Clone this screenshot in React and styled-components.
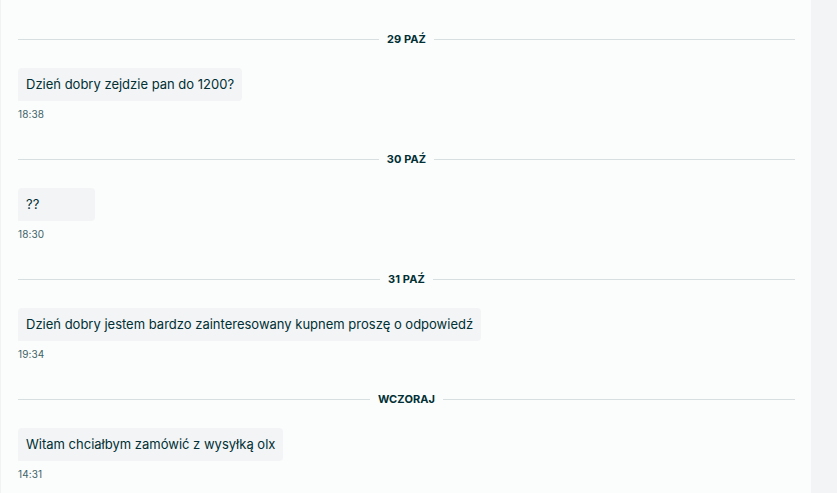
import React from 'react';
import styled, { createGlobalStyle } from 'styled-components';

const GlobalStyle = createGlobalStyle`
  html, body {
    margin: 0;
    padding: 0;
    background: #fbfcfc;
  }
  * {
    box-sizing: border-box;
  }
`;

const Page = styled.div`
  display: flex;
  width: 837px;
  height: 493px;
  overflow: hidden;
  font-family: Inter, "Noto Sans", sans-serif;
  color: #002f34;
`;

const Thread = styled.div`
  flex: 0 0 811px;
  display: flex;
  flex-direction: column;
  padding: 32px 16px 0 17px;
  background: #fbfcfc;
  border-left: 1px solid #f0f2f3;
`;

const Aside = styled.div`
  flex: 1;
  background: #f2f4f5;
`;

const DayGroup = styled.section`
  display: flex;
  flex-direction: column;
  align-items: flex-start;
  flex-shrink: 0;
  height: 120px;
`;

const DayDivider = styled.div`
  display: flex;
  align-items: center;
  gap: 8px;
  width: 100%;
  height: 14px;
  margin-bottom: 22px;
  font-size: 11px;
  font-weight: 700;
  letter-spacing: 0.1px;
  text-transform: uppercase;
  color: #002f34;

  &::before,
  &::after {
    content: '';
    flex: 1;
    height: 1px;
    background: #d8dfe0;
  }
`;

const Bubble = styled.div`
  min-width: 77px;
  padding: 8px 8px;
  border-radius: 4px 4px 4px 0;
  background: #f2f4f5;
  font-size: 13px;
  line-height: 17px;
  color: #002f34;
`;

const Time = styled.span`
  margin-top: 7px;
  font-size: 10px;
  line-height: 13px;
  letter-spacing: 0.1px;
  color: #406367;
`;

const days = [
  { label: '29 paź', text: 'Dzień dobry zejdzie pan do 1200?', time: '18:38' },
  { label: '30 paź', text: '??', time: '18:30' },
  {
    label: '31 paź',
    text: 'Dzień dobry jestem bardzo zainteresowany kupnem proszę o odpowiedź',
    time: '19:34',
  },
  { label: 'wczoraj', text: 'Witam chciałbym zamówić z wysyłką olx', time: '14:31' },
];

export default function App() {
  return (
    <>
      <GlobalStyle />
      <Page>
        <Thread>
          {days.map(day => (
            <DayGroup key={day.label}>
              <DayDivider>{day.label}</DayDivider>
              <Bubble>{day.text}</Bubble>
              <Time>{day.time}</Time>
            </DayGroup>
          ))}
        </Thread>
        <Aside />
      </Page>
    </>
  );
}
